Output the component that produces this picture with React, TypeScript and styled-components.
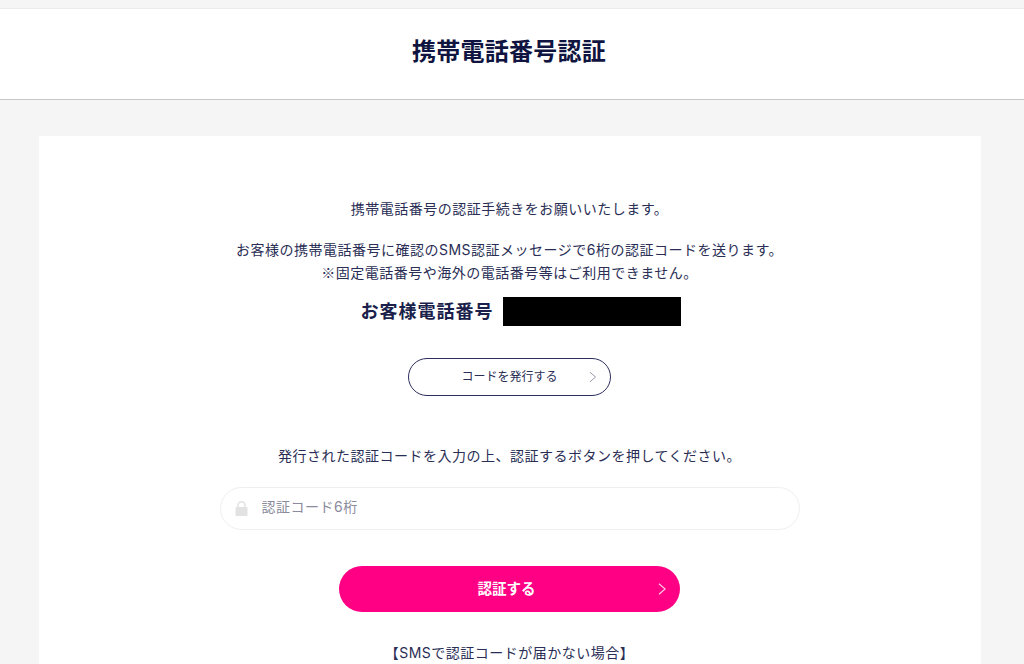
import styled, { createGlobalStyle } from 'styled-components'

const GlobalStyle = createGlobalStyle`
  html, body {
    margin: 0;
    padding: 0;
    height: 664px;
    overflow: hidden;
    background-color: #f5f5f5;
    font-family: Inter, 'Noto Sans CJK JP', 'Noto Sans', sans-serif;
    color: #1b1f4b;
  }
`

const Page = styled.div`
  padding-top: 8px;
`

const Header = styled.header`
  height: 90px;
  box-sizing: content-box;
  background-color: #fff;
  border-top: 1px solid #ececec;
  border-bottom: 1px solid #c8c8c8;
  display: flex;
  align-items: center;
  justify-content: center;
`

const Title = styled.h1`
  margin: 0 6px 4px 0;
  font-size: 24px;
  font-weight: 700;
  line-height: 1;
  letter-spacing: 0.25px;
  color: #0f1440;
`

const Card = styled.main`
  margin: 36px 43px 0 39px;
  padding: 61px 1px 0 0;
  height: 528px;
  overflow: hidden;
  box-sizing: border-box;
  background-color: #fff;
  display: flex;
  flex-direction: column;
  align-items: center;
`

const Lead = styled.p<{ $gap?: number }>`
  margin: ${props => props.$gap ?? 0}px 0 0;
  font-size: 14px;
  line-height: 23px;
  text-align: center;
  letter-spacing: 0.5px;
  color: #2a2e55;
`

const Mark = styled.span`
  font-family: 'Noto Sans CJK JP', sans-serif;
`

const PhoneRow = styled.div`
  margin-top: 13px;
  padding-left: 22px;
  display: flex;
  align-items: center;
  gap: 9px;
  height: 29px;
`

const PhoneLabel = styled.span`
  font-size: 18px;
  font-weight: 700;
  letter-spacing: 1px;
  line-height: 27px;
  color: #1b1f4b;
`

const Redacted = styled.div`
  width: 178px;
  height: 29px;
  background-color: #000;
`

const PillButton = styled.button<{ $primary?: boolean }>`
  position: relative;
  display: flex;
  align-items: center;
  justify-content: center;
  flex-shrink: 0;
  box-sizing: border-box;
  font-family: inherit;
  cursor: pointer;
  border-radius: 999px;
  width: ${props => (props.$primary ? '341px' : '203px')};
  height: ${props => (props.$primary ? '46px' : '38px')};
  margin-top: ${props => (props.$primary ? '36px' : '32px')};
  padding: ${props => (props.$primary ? '0 6px 4px 0' : '0 0 3px')};
  background-color: ${props => (props.$primary ? '#ff0084' : '#fff')};
  border: ${props => (props.$primary ? 'none' : '1px solid #2c2f5c')};
  color: ${props => (props.$primary ? '#fff' : '#2a2e55')};
  font-size: ${props => (props.$primary ? '14.5px' : '12px')};
  font-weight: ${props => (props.$primary ? 700 : 400)};
`

const Chevron = styled.svg<{ $right: number }>`
  position: absolute;
  right: ${props => props.$right}px;
  top: 50%;
  transform: translateY(-50%);
`

const InputWrap = styled.div`
  margin-top: 20px;
  width: 580px;
  height: 43px;
  flex-shrink: 0;
  box-sizing: border-box;
  border: 1px solid #efefef;
  border-radius: 999px;
  display: flex;
  align-items: center;
  gap: 14px;
  padding-left: 14px;
`

const CodeInput = styled.input`
  flex: 1;
  border: none;
  outline: none;
  padding: 0 0 5px;
  background: transparent;
  font-family: inherit;
  font-size: 14px;
  letter-spacing: 0.5px;
  &::placeholder {
    color: #8a8b9c;
    opacity: 1;
  }
`

const Arrow = ({ right, color, size }: { right: number; color: string; size: number }) => (
  <Chevron $right={right} width={size * 0.7} height={size} viewBox="0 0 7 10" fill="none">
    <path d="M0.8 0.6 L6 5 L0.8 9.4" stroke={color} strokeWidth="0.9" />
  </Chevron>
)

const LockIcon = () => (
  <svg width="13" height="15" viewBox="0 0 13 15">
    <path d="M3 6.5V4.2a3.5 3.5 0 0 1 7 0v2.3" fill="none" stroke="#e2e2e2" strokeWidth="1.6" />
    <rect x="0.5" y="6" width="12" height="9" rx="1" fill="#e2e2e2" />
  </svg>
)

export default function App() {
  return (
    <>
      <GlobalStyle />
      <Page>
        <Header>
          <Title>携帯電話番号認証</Title>
        </Header>
        <Card>
          <Lead>携帯電話番号の認証手続きをお願いいたします。</Lead>
          <Lead $gap={18}>
            お客様の携帯電話番号に確認のSMS認証メッセージで6桁の認証コードを送ります。
            <br />
            <Mark>※</Mark>固定電話番号や海外の電話番号等はご利用できません。
          </Lead>
          <PhoneRow>
            <PhoneLabel>お客様電話番号</PhoneLabel>
            <Redacted />
          </PhoneRow>
          <PillButton>
            コードを発行する
            <Arrow right={13} color="#9a9bab" size={11} />
          </PillButton>
          <Lead $gap={48}>発行された認証コードを入力の上、認証するボタンを押してください。</Lead>
          <InputWrap>
            <LockIcon />
            <CodeInput placeholder="認証コード6桁" />
          </InputWrap>
          <PillButton $primary>
            認証する
            <Arrow right={14} color="#ffd0e8" size={12} />
          </PillButton>
          <Lead $gap={29}>【SMSで認証コードが届かない場合】</Lead>
        </Card>
      </Page>
    </>
  )
}
